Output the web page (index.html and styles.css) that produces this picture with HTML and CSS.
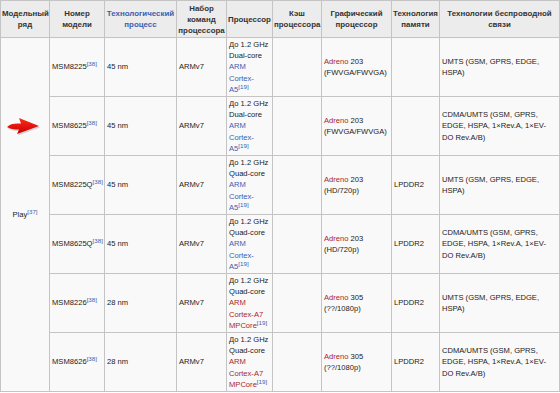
FILE: index.html
```html
<!DOCTYPE html>
<html lang="ru">
<head>
  <meta charset="UTF-8" />
  <meta name="viewport" content="width=device-width, initial-scale=1.0">
  <title>Snapdragon S4 Play</title>
  <link rel="stylesheet" href="styles.css">
</head>
<body>
  <div class="page">
    <table class="soc-table">
      <colgroup>
        <col class="c-series">
        <col class="c-model">
        <col class="c-tech">
        <col class="c-isa">
        <col class="c-cpu">
        <col class="c-cache">
        <col class="c-gpu">
        <col class="c-mem">
        <col class="c-radio">
      </colgroup>
      <thead>
        <tr>
          <th>Модельный ряд</th>
          <th>Номер модели</th>
          <th><a href="#">Технологический процесс</a></th>
          <th>Набор команд процессора</th>
          <th>Процессор</th>
          <th>Кэш процессора</th>
          <th>Графический процессор</th>
          <th>Технология памяти</th>
          <th>Технологии беспроводной связи</th>
        </tr>
      </thead>
      <tbody>
        <tr>
          <td rowspan="6" class="series">Play<sup>[37]</sup></td>
          <td>MSM8225<sup>[38]</sup></td>
          <td>45 nm</td>
          <td>ARMv7</td>
          <td>До 1.2 GHz<br>Dual-core<br><a href="#">ARM<br>Cortex-<br>A5</a><sup>[19]</sup></td>
          <td></td>
          <td><a href="#" class="red">Adreno</a> 203<br>(FWVGA/FWVGA)</td>
          <td></td>
          <td>UMTS (GSM, GPRS, EDGE,<br>HSPA)</td>
        </tr>
        <tr>
          <td>MSM8625<sup>[38]</sup></td>
          <td>45 nm</td>
          <td>ARMv7</td>
          <td>До 1.2 GHz<br>Dual-core<br><a href="#">ARM<br>Cortex-<br>A5</a><sup>[19]</sup></td>
          <td></td>
          <td><a href="#" class="red">Adreno</a> 203<br>(FWVGA/FWVGA)</td>
          <td></td>
          <td>CDMA/UMTS (GSM, GPRS,<br>EDGE, HSPA, 1×Rev.A, 1×EV-<br>DO Rev.A/B)</td>
        </tr>
        <tr>
          <td>MSM8225Q<sup>[38]</sup></td>
          <td>45 nm</td>
          <td>ARMv7</td>
          <td>До 1.2 GHz<br>Quad-core<br><a href="#">ARM<br>Cortex-<br>A5</a><sup>[19]</sup></td>
          <td></td>
          <td><a href="#" class="red">Adreno</a> 203<br>(HD/720p)</td>
          <td>LPDDR2</td>
          <td>UMTS (GSM, GPRS, EDGE,<br>HSPA)</td>
        </tr>
        <tr>
          <td>MSM8625Q<sup>[38]</sup></td>
          <td>45 nm</td>
          <td>ARMv7</td>
          <td>До 1.2 GHz<br>Quad-core<br><a href="#">ARM<br>Cortex-<br>A5</a><sup>[19]</sup></td>
          <td></td>
          <td><a href="#" class="red">Adreno</a> 203<br>(HD/720p)</td>
          <td>LPDDR2</td>
          <td>CDMA/UMTS (GSM, GPRS,<br>EDGE, HSPA, 1×Rev.A, 1×EV-<br>DO Rev.A/B)</td>
        </tr>
        <tr>
          <td>MSM8226<sup>[38]</sup></td>
          <td>28 nm</td>
          <td>ARMv7</td>
          <td>До 1.2 GHz<br>Quad-core<br><a href="#" class="red">ARM<br>Cortex-A7<br>MPCore</a><sup>[19]</sup></td>
          <td></td>
          <td><a href="#" class="red">Adreno</a> 305<br>(??/1080p)</td>
          <td>LPDDR2</td>
          <td>UMTS (GSM, GPRS, EDGE,<br>HSPA)</td>
        </tr>
        <tr>
          <td>MSM8626<sup>[38]</sup></td>
          <td>28 nm</td>
          <td>ARMv7</td>
          <td>До 1.2 GHz<br>Quad-core<br><a href="#" class="red">ARM<br>Cortex-A7<br>MPCore</a><sup>[19]</sup></td>
          <td></td>
          <td><a href="#" class="red">Adreno</a> 305<br>(??/1080p)</td>
          <td>LPDDR2</td>
          <td>CDMA/UMTS (GSM, GPRS,<br>EDGE, HSPA, 1×Rev.A, 1×EV-<br>DO Rev.A/B)</td>
        </tr>
      </tbody>
    </table>

    <svg class="pointer" width="36" height="20" viewBox="0 0 36 20">
      <defs>
        <linearGradient id="arrowFill" x1="0" y1="0" x2="0" y2="1">
          <stop offset="0" stop-color="#ff2a1a"/>
          <stop offset="1" stop-color="#c80000"/>
        </linearGradient>
      </defs>
      <path d="M2 11 C5 8 9 7 16 7.5 L14 2 L34 10 L12 18 L14 13.5 C9 13.5 5 13 2 11 Z" fill="#000" opacity="0.15" transform="translate(1 1.5)"/>
      <path d="M2 11 C5 8 9 7 16 7.5 L14 2 L34 10 L12 18 L14 13.5 C9 13.5 5 13 2 11 Z" fill="url(#arrowFill)"/>
    </svg>
  </div>
</body>
</html>
```

FILE: styles.css
```css
html, body {
  margin: 0;
  padding: 0;
  background-color: #ffffff;
  font-family: "Liberation Sans", Arial, sans-serif;
}
.page {
  position: relative;
  width: 560px;
  height: 393px;
  overflow: hidden;
}
.soc-table {
  width: 559px;
  table-layout: fixed;
  border-collapse: collapse;
  font-size: 7.6px;
  line-height: 11.2px;
  color: #222;
  background-color: #f9f9f9;
  border: 1px solid #c4c4c4;
}
.c-series { width: 49px; }
.c-model { width: 55px; }
.c-tech { width: 72px; }
.c-isa { width: 50px; }
.c-cpu { width: 46px; }
.c-cache { width: 49px; }
.c-gpu { width: 70px; }
.c-mem { width: 48px; }
.c-radio { width: 120px; }

.soc-table th,
.soc-table td {
  border: 1px solid #c4c4c4;
  vertical-align: middle;
  overflow: hidden;
}
.soc-table th {
  background-color: #ececec;
  font-weight: bold;
  font-size: 7.9px;
  color: #333;
  text-align: center;
  padding: 1px 1px;
  height: 34px;
  line-height: 11px;
}
.soc-table td {
  padding: 1px 2px;
  height: 56px;
  text-align: left;
  white-space: nowrap;
}
.soc-table td.series {
  text-align: center;
}
.soc-table a {
  color: #3a60b0;
  text-decoration: none;
}
.soc-table a.red {
  color: #a8282b;
}
.soc-table sup {
  font-size: 6.2px;
  line-height: 0;
  color: #3a60b0;
  vertical-align: 3px;
}
.pointer {
  position: absolute;
  left: 5px;
  top: 116px;
}
```
